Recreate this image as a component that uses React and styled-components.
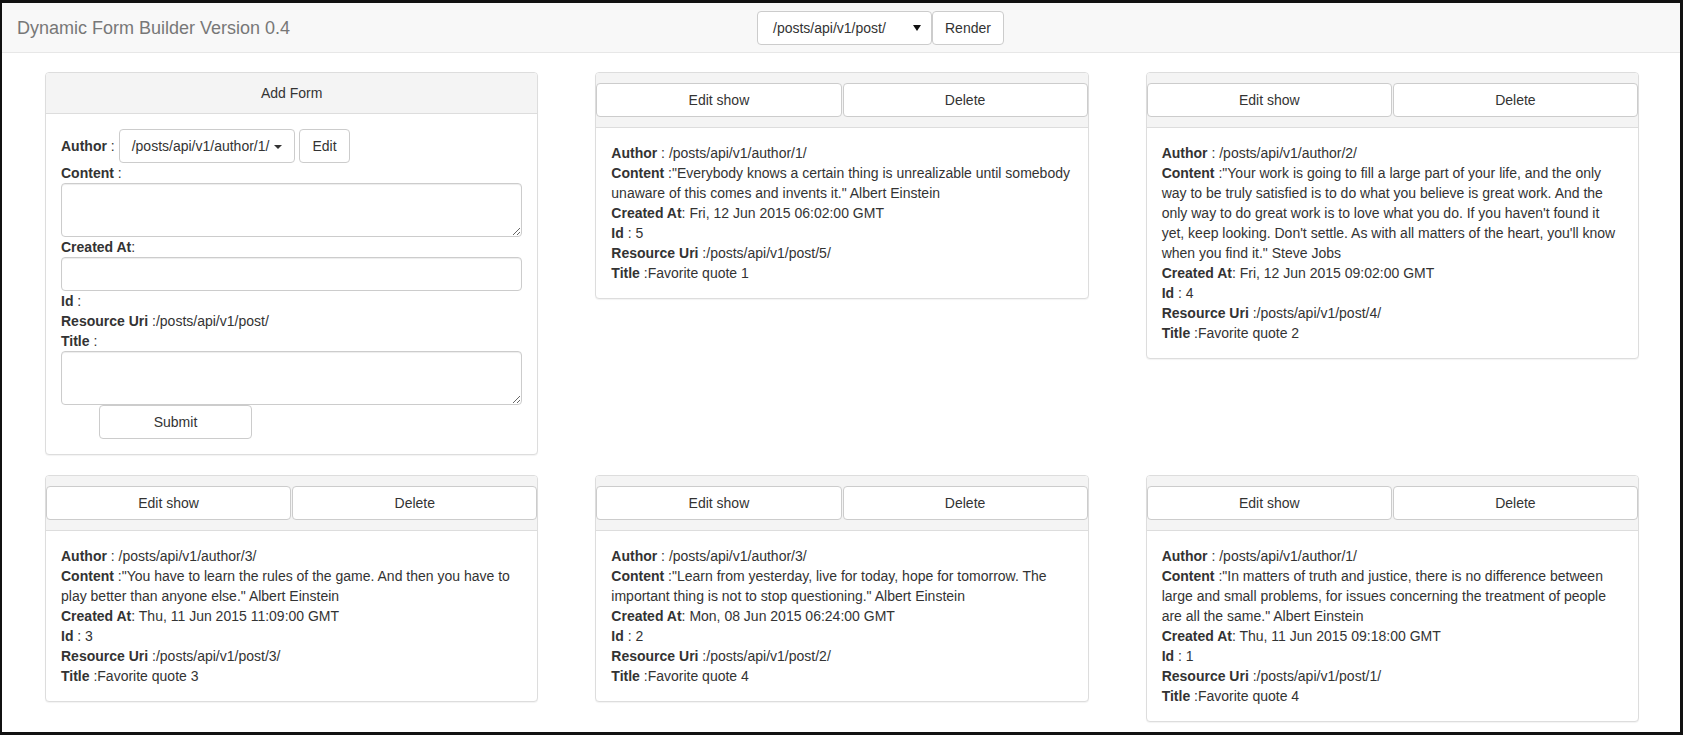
import React from "react";
import styled, { createGlobalStyle } from "styled-components";

const GlobalStyle = createGlobalStyle`
  * { box-sizing: border-box; }
  body {
    margin: 0;
    font-family: "Liberation Sans", Arial, sans-serif;
    font-size: 14px;
    line-height: 20px;
    color: #333;
    background: #fff;
  }
`;

const posts = [
  {
    id: 5,
    author: "/posts/api/v1/author/1/",
    content: '"Everybody knows a certain thing is unrealizable until somebody unaware of this comes and invents it." Albert Einstein',
    createdAt: "Fri, 12 Jun 2015 06:02:00 GMT",
    title: "Favorite quote 1",
  },
  {
    id: 4,
    author: "/posts/api/v1/author/2/",
    content: "\"Your work is going to fill a large part of your life, and the only way to be truly satisfied is to do what you believe is great work. And the only way to do great work is to love what you do. If you haven't found it yet, keep looking. Don't settle. As with all matters of the heart, you'll know when you find it.\" Steve Jobs",
    createdAt: "Fri, 12 Jun 2015 09:02:00 GMT",
    title: "Favorite quote 2",
  },
  {
    id: 3,
    author: "/posts/api/v1/author/3/",
    content: '"You have to learn the rules of the game. And then you have to play better than anyone else." Albert Einstein',
    createdAt: "Thu, 11 Jun 2015 11:09:00 GMT",
    title: "Favorite quote 3",
  },
  {
    id: 2,
    author: "/posts/api/v1/author/3/",
    content: '"Learn from yesterday, live for today, hope for tomorrow. The important thing is not to stop questioning." Albert Einstein',
    createdAt: "Mon, 08 Jun 2015 06:24:00 GMT",
    title: "Favorite quote 4",
  },
  {
    id: 1,
    author: "/posts/api/v1/author/1/",
    content: '"In matters of truth and justice, there is no difference between large and small problems, for issues concerning the treatment of people are all the same." Albert Einstein',
    createdAt: "Thu, 11 Jun 2015 09:18:00 GMT",
    title: "Favorite quote 4",
  },
];

const Frame = styled.div`
  height: 735px;
  overflow: hidden;
  border-style: solid;
  border-color: #111;
  border-width: 3px 3px 3px 2px;
`;

const Navbar = styled.nav`
  display: flex;
  align-items: center;
  height: 50px;
  background: #f8f8f8;
  border-bottom: 1px solid #e7e7e7;
`;

const Brand = styled.div`
  flex: 0 0 755px;
  padding-left: 15px;
  font-size: 18px;
  color: #777;
`;

const NavForm = styled.div`
  display: flex;
  align-items: center;
`;

const FakeSelect = styled.div`
  display: flex;
  align-items: center;
  justify-content: space-between;
  width: ${({ $width }) => $width}px;
  height: 34px;
  padding: 0 10px 0 15px;
  border: 1px solid #ccc;
  border-radius: 4px;
  background: #fff;
  color: #333;
`;

const Arrow = styled.span`
  width: 0;
  height: 0;
  border-left: 4px solid transparent;
  border-right: 4px solid transparent;
  border-top: 6px solid #111;
`;

const Caret = styled.span`
  display: inline-block;
  width: 0;
  height: 0;
  margin-left: 5px;
  vertical-align: middle;
  border-left: 4px solid transparent;
  border-right: 4px solid transparent;
  border-top: 4px solid #333;
`;

const Button = styled.button`
  display: inline-block;
  height: 34px;
  padding: 6px 12px;
  margin: 0;
  font-family: inherit;
  font-size: 14px;
  line-height: 20px;
  color: #333;
  background: #fff;
  border: 1px solid #ccc;
  border-radius: 4px;
  white-space: nowrap;
  cursor: pointer;
  flex: ${({ $grow }) => ($grow ? "1 1 0" : "none")};
  width: ${({ $width }) => ($width ? `${$width}px` : "auto")};
  margin-left: ${({ $offset }) => ($offset ? `${$offset}px` : "0")};
`;

const Grid = styled.main`
  display: grid;
  grid-template-columns: repeat(3, 1fr);
  column-gap: 57px;
  row-gap: 20px;
  align-items: start;
  padding: 19px 41px 0 43px;
`;

const Panel = styled.section`
  background: #fff;
  border: 1px solid #ddd;
  border-radius: 4px;
  box-shadow: 0 1px 1px rgba(0, 0, 0, 0.05);
`;

const PanelHeading = styled.div`
  display: flex;
  justify-content: center;
  gap: 1px;
  padding: ${({ $buttons }) => ($buttons ? "10px 0" : "10px 15px")};
  background: #f4f4f4;
  border-bottom: 1px solid #ddd;
  border-radius: 3px 3px 0 0;
`;

const PanelBody = styled.div`
  padding: 15px;
`;

const Line = styled.div`
  min-height: 20px;
`;

const AuthorRow = styled.div`
  display: flex;
  align-items: center;
  gap: 4px;
`;

const TextArea = styled.textarea`
  display: block;
  width: 100%;
  height: 54px;
  margin: 0;
  padding: 6px 12px;
  font-family: inherit;
  font-size: 14px;
  border: 1px solid #ccc;
  border-radius: 4px;
  box-shadow: inset 0 1px 1px rgba(0, 0, 0, 0.075);
`;

const Input = styled.input`
  display: block;
  width: 100%;
  height: 34px;
  margin: 0;
  padding: 6px 12px;
  font-family: inherit;
  font-size: 14px;
  border: 1px solid #ccc;
  border-radius: 4px;
  box-shadow: inset 0 1px 1px rgba(0, 0, 0, 0.075);
`;

const Field = ({ label, sep = " :", children }) => (
  <Line>
    <b>{label}</b>
    {sep}
    {children}
  </Line>
);

const AddForm = () => (
  <Panel>
    <PanelHeading>Add Form</PanelHeading>
    <PanelBody>
      <AuthorRow>
        <span>
          <b>Author</b> :
        </span>
        <Button>
          /posts/api/v1/author/1/
          <Caret />
        </Button>
        <Button>Edit</Button>
      </AuthorRow>
      <Field label="Content" />
      <TextArea />
      <Field label="Created At" sep=":" />
      <Input type="text" />
      <Field label="Id" />
      <Field label="Resource Uri" sep=" :/posts/api/v1/post/" />
      <Field label="Title" />
      <TextArea />
      <Button $width={153} $offset={38}>
        Submit
      </Button>
    </PanelBody>
  </Panel>
);

const PostCard = ({ post }) => (
  <Panel>
    <PanelHeading $buttons>
      <Button $grow>Edit show</Button>
      <Button $grow>Delete</Button>
    </PanelHeading>
    <PanelBody>
      <Field label="Author" sep={` : ${post.author}`} />
      <Field label="Content" sep={` :${post.content}`} />
      <Field label="Created At" sep={`: ${post.createdAt}`} />
      <Field label="Id" sep={` : ${post.id}`} />
      <Field label="Resource Uri" sep={` :/posts/api/v1/post/${post.id}/`} />
      <Field label="Title" sep={` :${post.title}`} />
    </PanelBody>
  </Panel>
);

export default function App() {
  return (
    <>
      <GlobalStyle />
      <Frame>
        <Navbar>
          <Brand>Dynamic Form Builder Version 0.4</Brand>
          <NavForm>
            <FakeSelect $width={175}>
              /posts/api/v1/post/
              <Arrow />
            </FakeSelect>
            <Button>Render</Button>
          </NavForm>
        </Navbar>
        <Grid>
          <AddForm />
          {posts.map((post) => (
            <PostCard key={post.id} post={post} />
          ))}
        </Grid>
      </Frame>
    </>
  );
}
